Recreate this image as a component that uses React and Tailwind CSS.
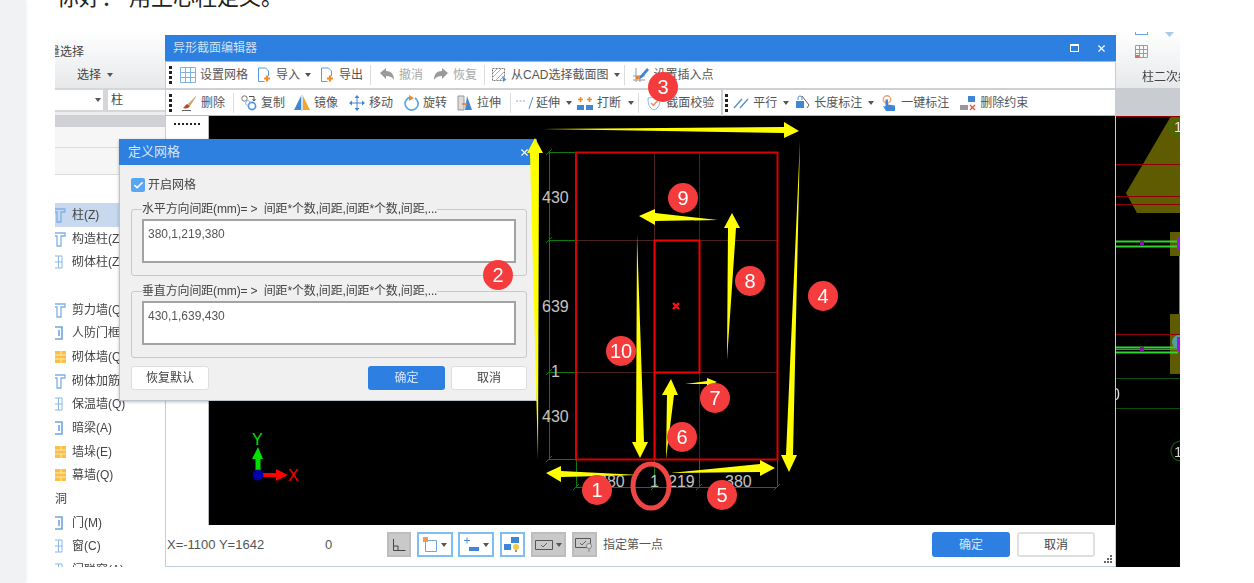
import { Check, X } from 'lucide-react';

const Dots = ({ className = '' }) => (
  <div className={`flex h-[18px] w-[3px] flex-col justify-between ${className}`}>
    <span className="h-[3px] w-[3px] bg-[#222]" />
    <span className="h-[3px] w-[3px] bg-[#222]" />
    <span className="h-[3px] w-[3px] bg-[#222]" />
    <span className="h-[3px] w-[3px] bg-[#222]" />
  </div>
);

const Caret = ({ className = '' }) => (
  <svg width="6" height="4" viewBox="0 0 6 4" className={`shrink-0 ${className}`}><path d="M0 0h6L3 4z" fill="#555" /></svg>
);

const Sep = ({ className = '' }) => <div className={`h-[20px] w-px shrink-0 bg-[#dcdcdc] ${className}`} />;

const Svg = ({ children, w = 16 }) => (
  <svg width={w} height="16" viewBox={`0 0 ${w} 16`} className="shrink-0" fill="none">{children}</svg>
);

// toolbar icons
const GridIcon = () => (
  <Svg><path d="M.5.5h15v15H.5zM5.5.5v15M10.5.5v15M.5 5.5h15M.5 10.5h15" stroke="#7db1e6" /></Svg>
);
const DocIcon = () => (
  <Svg><path d="M2.5 1h7l3 3v5M2.5 1v13.5h6" stroke="#5b9be0" /><path d="M8 11.5h6M11 8.5v6" stroke="#f08a2c" strokeWidth="2.2" /></Svg>
);
const UndoIcon = () => (
  <Svg><path d="M1 6l6-5v3c5 0 8 3 8 9-2-3-4-4-8-4v3z" fill="#9a9a9a" /></Svg>
);
const RedoIcon = () => (
  <Svg><path d="M15 6L9 1v3c-5 0-8 3-8 9 2-3 4-4 8-4v3z" fill="#9a9a9a" /></Svg>
);
const CadIcon = () => (
  <Svg><path d="M1.5 1.5h12v12h-12z" stroke="#777" strokeDasharray="2 1" /><path d="M2 10l8-8M2 6l4-4M5 13l8-8M9 13l4-4" stroke="#aaa" /><path d="M11 9l4.5 4-2 .5-.8 2z" fill="#3f8fe0" /></Svg>
);
const InsertIcon = () => (
  <Svg><path d="M3 1v14M0 9h12M0 13h12M7 8v7" stroke="#999" /><path d="M7 9l7-8 2 2-7 8-3 1z" fill="#3f86d8" /><circle cx="4.5" cy="10.5" r="1.8" fill="#ef7d22" /></Svg>
);
const BrushIcon = () => (
  <Svg><path d="M15 1L7 9l2 2 6-9z" fill="#c9a36a" /><path d="M6 9c-2 1-2 3-4 4 3 1 6 0 7-2z" fill="#b9481e" /><path d="M1 15.5h9" stroke="#666" /></Svg>
);
const CopyIcon = () => (
  <Svg><circle cx="3.5" cy="3.5" r="2.7" stroke="#777" /><circle cx="11" cy="11" r="3.6" stroke="#4a93de" strokeWidth="1.6" /><circle cx="7" cy="8" r="2.4" stroke="#8ab7e6" /><path d="M8 1.5h5v4M11.5 4l1.5 2 1.5-2" stroke="#555" /></Svg>
);
const MirrorIcon = () => (
  <Svg><path d="M7 1v14H0z" fill="#3f86d8" /><path d="M9 1v14h7z" fill="#f1a62f" /><path d="M8 0v16" stroke="#bbb" /></Svg>
);
const MoveIcon = () => (
  <Svg><path d="M8 3v10M3 8h10" stroke="#3f86d8" /><path d="M8 0l2.5 3h-5zM8 16l2.5-3h-5zM0 8l3-2.5v5zM16 8l-3-2.5v5z" fill="#3f86d8" /></Svg>
);
const RotateIcon = () => (
  <Svg><path d="M6 2.6A6.5 6.5 0 1 0 12 3" stroke="#5ba3e8" strokeWidth="1.7" /><path d="M6 0l5 3-5 3z" fill="#ef8a22" /></Svg>
);
const StretchIcon = () => (
  <Svg><path d="M1 1h6v14H1z" fill="#ddd" stroke="#999" /><path d="M10 1l5 14H8z" fill="#3f86d8" /><path d="M5 9h5" stroke="#ef7d22" strokeWidth="1.6" /></Svg>
);
const ExtendIcon = () => (
  <Svg w={19}><path d="M0 6h10" stroke="#8aa9c8" strokeDasharray="2 1.5" /><path d="M13 14l4-12" stroke="#5b8fc8" /></Svg>
);
const BreakIcon = () => (
  <Svg><path d="M0 10h7v5H0zM9 10h7v5H9z" fill="#3f86d8" /><path d="M3.5 2v5M1 4.5h5M12.5 2v5M10 4.5h5" stroke="#ef8a22" strokeWidth="1.6" /></Svg>
);
const ShieldIcon = () => (
  <Svg><path d="M8 1c2 1.5 4 2 6 2 0 6-1 10-6 12C3 13 2 9 2 3c2 0 4-.5 6-2z" stroke="#8ab7e6" /><path d="M5 8l2.5 2.5L12 5" stroke="#ef8a5a" strokeWidth="1.5" /></Svg>
);
const ParallelIcon = () => (
  <Svg><path d="M1 13L9 4M7 13l8-9" stroke="#5b8fc8" strokeWidth="1.4" /></Svg>
);
const LengthIcon = () => (
  <Svg><path d="M4 5V3a2 2 0 0 1 4 0v2" stroke="#4a93de" /><path d="M2 6h8v7H2z" fill="#3f86d8" /><path d="M8 1l7 9-2 3" stroke="#666" /></Svg>
);
const HandIcon = () => (
  <Svg><circle cx="6" cy="4.5" r="3.7" stroke="#f0a070" strokeWidth="1.4" /><path d="M4.5 4.5h2.5v5l7 1v5.5H5l-3-5 2.500.5z" fill="#3f86d8" /></Svg>
);
const ConstraintIcon = () => (
  <Svg><path d="M0 10h8v5H0z" fill="#999" /><path d="M8 1h7v6H8zM8 1v9" fill="#3f86d8" /><path d="M10 10l5 5M15 10l-5 5" stroke="#e5533d" strokeWidth="1.3" /></Svg>
);

const Tool = ({ icon, label, muted, className = '' }) => (
  <div className={`flex shrink-0 items-center gap-[4px] ${className}`}>
    {icon}
    <span className={muted ? 'text-[#a8a8a8]' : 'text-[#555]'}>{label}</span>
  </div>
);

// ribbon behind the editor, only the bottom of the text shows
const RibbonClip = () => (
  <div className="h-[3px] w-[951px] overflow-hidden text-xs text-[#444]">
    <div className="-mt-[13px] flex whitespace-nowrap">
      <span className="ml-[49px]">设置网格</span>
      <span className="ml-[30px]">设置楼层表</span>
      <span className="ml-[30px]">自动平齐板</span>
      <span className="ml-[24px]">截面编辑</span>
      <span className="ml-[50px]">移动</span>
      <span className="ml-[60px]">镜像</span>
      <span className="ml-[40px]">删除</span>
      <span className="ml-[44px]">旋转</span>
      <span className="ml-[30px]">拉伸</span>
      <span className="ml-[36px]">删除约束</span>
    </div>
  </div>
);

// side list icons are cut by the left edge of the shot
const BlueOutline = () => (
  <svg width="11" height="16" viewBox="0 0 11 16" fill="none"><path d="M0 2h10v3H6v10H2V5H0" stroke="#7db1e6" strokeWidth="1.3" /></svg>
);
const OrangeBlock = () => (
  <svg width="11" height="12" viewBox="0 0 11 12"><path d="M0 0h11v12H0z" fill="#fbbf44" /><path d="M0 4h11M0 8h11M6 0v4M6 8v4" stroke="#fde8b8" /></svg>
);
const BlueDoor = () => (
  <svg width="8" height="14" viewBox="0 0 8 14" fill="none"><path d="M0 1h7v12H0M4 4v6" stroke="#6ea6e0" strokeWidth="1.6" /></svg>
);
const BlueWindow = () => (
  <svg width="8" height="14" viewBox="0 0 8 14" fill="none"><path d="M0 1h7v12H0M0 7h7M3.500 1v12" stroke="#8ab7e6" /></svg>
);

const sideItems = [
  { label: '柱(Z)', icon: <BlueOutline />, on: true },
  { label: '构造柱(Z)', icon: <BlueOutline /> },
  { label: '砌体柱(Z)', icon: <BlueWindow /> },
  { label: '' },
  { label: '剪力墙(Q)', icon: <BlueOutline /> },
  { label: '人防门框墙', icon: <BlueDoor /> },
  { label: '砌体墙(Q)', icon: <OrangeBlock /> },
  { label: '砌体加筋', icon: <BlueOutline /> },
  { label: '保温墙(Q)', icon: <BlueWindow /> },
  { label: '暗梁(A)', icon: <BlueDoor /> },
  { label: '墙垛(E)', icon: <OrangeBlock /> },
  { label: '幕墙(Q)', icon: <OrangeBlock /> },
  { label: '洞', head: true },
  { label: '门(M)', icon: <BlueDoor /> },
  { label: '窗(C)', icon: <BlueWindow /> },
  { label: '门联窗(A)', icon: <BlueWindow /> },
];

const LeftPanel = () => (
  <div className="w-[110px] shrink-0 overflow-hidden text-xs text-[#444]">
    <div className="h-[56px] overflow-hidden bg-gradient-to-b from-white to-[#e6e8ea] pt-[12px]">
      <div className="-ml-[19px] h-[16px] leading-[16px] whitespace-nowrap">批量选择</div>
      <div className="mt-[7px] ml-[22px] flex h-[16px] items-center gap-[6px]">选择 <Caret /></div>
    </div>
    <div className="flex h-[24px] gap-[5px] bg-[#d4d6d9] py-[2px]">
      <div className="flex w-[48px] items-center justify-end bg-white pr-[2px]"><Caret /></div>
      <div className="flex-1 bg-white pl-[3px] leading-[20px]">柱</div>
    </div>
    <div className="h-[3px] bg-[#eeeeee]" />
    <div className="h-[12px] bg-[#cfd1d5]" />
    <div className="h-[21px] border-b border-[#dcdcdc] bg-[#f6f6f6]" />
    <div className="h-[27px] border-b border-[#dcdcdc] bg-[#f6f6f6]" />
    <div className="h-[28px]" />
    <div>
      {sideItems.map((item, i) => (
        <div key={i} className={`flex h-[23.7px] items-center ${item.on ? 'bg-[#c8d9ef]' : ''}`}>
          {!item.head && <div className="flex w-[17px] shrink-0 items-center">{item.icon}</div>}
          <span className="whitespace-nowrap">{item.label}</span>
        </div>
      ))}
    </div>
  </div>
);

const RightPanel = () => (
  <div className="w-[64px] shrink-0 overflow-hidden">
    <div className="flex h-[56px] bg-gradient-to-b from-white to-[#e6e8ea]">
      <div className="ml-[10px] h-[52px] w-px bg-[#dddddd]" />
      <div className="ml-[9px] text-xs text-[#444]">
        <div className="flex items-start">
          <div className="h-[3px] w-[13px] border-x border-b border-[#6ea6e0]" />
          <svg width="9" height="5" viewBox="0 0 9 5" className="ml-[17px]"><path d="M0 0h9L4.500 5z" fill="#a8c8ec" /></svg>
        </div>
        <svg width="13" height="13" viewBox="0 0 13 13" fill="none" className="mt-[8px]">
          <path d="M.5.5h12v12H.5zM4.500.5v12M8.500.5v12M.5 4.500h12M.5 8.500h12" stroke="#6ea6e0" />
          <path d="M0 10h4v3H0z" fill="#d9714a" />
        </svg>
        <div className="mt-[11px] ml-[7px] w-[60px] whitespace-nowrap">柱二次编辑</div>
      </div>
    </div>
    <div className="h-[28px] bg-[#c9ccd0]" />
    <svg width="64" height="451" viewBox="1116 116 64 451" className="block bg-black">
      <path d="M1171 116h9v97h-43l-11-20z" fill="#5f5b00" />
      <path d="M1116 116.500h64M1116 164.500h64M1116 196.500h64M1116 204.500h64" stroke="#8f0000" />
      <path d="M1170 232h10v24h-10zM1170 314h10v60h-10z" fill="#5f5b00" />
      <circle cx="1178" cy="127" r="8" fill="#5f5b00" stroke="#2f7a00" strokeWidth="1.5" />
      <text x="1174" y="132" fontSize="15" fill="#e5e5e5">1</text>
      <path d="M1116 241.500h62M1116 246.500h62M1116 347.500h62M1116 352.500h62" stroke="#2fd62f" strokeWidth="2" />
      <path d="M1116 334.500h64" stroke="#8f0000" />
      <path d="M1116 349.500h62" stroke="#a06a30" />
      <path d="M1179.500 256v58" stroke="#2fb82f" />
      <circle cx="1179" cy="342" r="7" fill="#4fa0a0" />
      <path d="M1140 241h4v4h-4zM1140 347h4v4h-4z" fill="#8a10b0" />
      <path d="M1177 238h3v12h-3zM1177 337h3v14h-3z" fill="#a010f0" />
      <path d="M1116 378.500h64M1116 408.500h64" stroke="#0a4f0a" />
      <text x="1111" y="400" fontSize="16" fill="#d8d8d8">0</text>
      <circle cx="1181" cy="451" r="10" stroke="#0a5c0a" strokeWidth="1.2" />
      <text x="1174" y="457" fontSize="15" fill="#d8d8d8">1</text>
    </svg>
  </div>
);

const CadDrawing = () => (
  <svg width="906" height="409" viewBox="209 116 906 409" className="block bg-black" fill="none">
    <path d="M549.500 152v307M549 152.500h27M549 240.500h27M549 372.500h27M549 459.500h27M576.500 459v28M654.500 459v28M699.500 459v28M777.500 459v28M576 487.500h201" stroke="#0e7a0e" />
    <path d="M546 155l6-6M546 243l6-6M546 375l6-6M546 462l6-6M573 490l6-6M651 490l6-6M696 490l6-6M774 490l6-6" stroke="#0e7a0e" />
    <path d="M654.500 152v88M699.500 152v88M576 240.500h78M699 240.500h78M576 372.500h78M699 372.500h78M699.500 372v87" stroke="#4a2020" />
    <path d="M576 152.500h201.500v307H576z" stroke="#d80000" strokeWidth="2" />
    <path d="M654.500 240.500h45v132h-45zM654.500 372v87" stroke="#f00000" strokeWidth="2" />
    <path d="M673 303l6 6M679 303l-6 6" stroke="#ff1010" strokeWidth="2.4" />
    <g fill="#c4c4c4" fontSize="16">
      <text x="542" y="203">430</text>
      <text x="542" y="312">639</text>
      <text x="551" y="377">1</text>
      <text x="542" y="422">430</text>
      <text x="598" y="487">380</text>
      <text x="650" y="487">1</text>
      <text x="668" y="487">219</text>
      <text x="725" y="487">380</text>
    </g>
    <path d="M258 475v-20" stroke="#00e000" strokeWidth="5" />
    <path d="M258 447l-6 12h11z" fill="#00e000" />
    <path d="M258 475h20" stroke="#ff0000" strokeWidth="4" />
    <path d="M288 475l-12-6v12z" fill="#ff0000" />
    <circle cx="258" cy="475" r="5.500" fill="#0000a8" />
    <text x="252" y="445" fontSize="16" fill="#00e000">Y</text>
    <text x="288" y="481" fontSize="16" fill="#ff0000">X</text>
  </svg>
);

const StatusBtn = ({ blue, children, className = '' }) => (
  <div className={`flex h-[25px] shrink-0 items-center justify-center gap-[3px] border-2 ${blue ? 'border-[#7fbdf5] bg-white' : 'border-[#bdbdbd] bg-[#c9c9c9]'} ${className}`}>
    {children}
  </div>
);

const EditorWindow = () => (
  <div className="absolute top-[3px] left-[110px] flex h-[532px] w-[951px] flex-col border-x border-b border-[#c3cde0] bg-white text-xs">
    <div className="-mx-px flex h-[26px] shrink-0 items-center bg-[#2d7fe0] pl-[8px] text-[#cfe1f7]">
      异形截面编辑器
      <div className="ml-auto h-[8px] w-[9px] border border-t-2 border-white" />
      <X className="mr-[9px] ml-[17px] h-[11px] w-[11px] text-white" strokeWidth={2.5} />
    </div>
    <div className="h-px shrink-0 bg-[#8fbdf0]" />

    <div className="flex h-[28px] shrink-0 items-center border-b-2 border-[#cdd0d4] pl-[3px]">
      <Dots />
      <Tool className="ml-[8px]" icon={<GridIcon />} label="设置网格" />
      <Tool className="ml-[8px]" icon={<DocIcon />} label="导入" />
      <Caret className="ml-[5px]" />
      <Tool className="ml-[8px]" icon={<DocIcon />} label="导出" />
      <Sep className="ml-[7px]" />
      <Tool className="ml-[8px]" icon={<UndoIcon />} label="撤消" muted />
      <Tool className="ml-[10px]" icon={<RedoIcon />} label="恢复" muted />
      <Sep className="ml-[7px]" />
      <Tool className="ml-[6px]" icon={<CadIcon />} label="从CAD选择截面图" />
      <Caret className="ml-[6px]" />
      <Sep className="ml-[4px]" />
      <Tool className="ml-[8px]" icon={<InsertIcon />} label="设置插入点" />
    </div>

    <div className="flex h-[26px] shrink-0 items-center border-b border-[#b5b8bc] pl-[3px]">
      <Dots />
      <Tool className="ml-[9px]" icon={<BrushIcon />} label="删除" />
      <Sep className="ml-[8px]" />
      <Tool className="ml-[7px]" icon={<CopyIcon />} label="复制" />
      <Tool className="ml-[9px]" icon={<MirrorIcon />} label="镜像" />
      <Tool className="ml-[11px]" icon={<MoveIcon />} label="移动" />
      <Tool className="ml-[10px]" icon={<RotateIcon />} label="旋转" />
      <Tool className="ml-[10px]" icon={<StretchIcon />} label="拉伸" />
      <Sep className="ml-[9px]" />
      <Tool className="ml-[5px] !gap-[1px]" icon={<ExtendIcon />} label="延伸" />
      <Caret className="ml-[6px]" />
      <Tool className="ml-[5px]" icon={<BreakIcon />} label="打断" />
      <Caret className="ml-[7px]" />
      <Sep className="ml-[4px]" />
      <Tool className="ml-[7px]" icon={<ShieldIcon />} label="截面校验" />
      <div className="ml-[7px] h-[26px] w-[2px] shrink-0 bg-[#cdd0d4]" />
      <Dots className="ml-[2px]" />
      <Tool className="ml-[5px]" icon={<ParallelIcon />} label="平行" />
      <Caret className="ml-[6px]" />
      <Tool className="ml-[5px]" icon={<LengthIcon />} label="长度标注" />
      <Caret className="ml-[6px]" />
      <Tool className="ml-[7px]" icon={<HandIcon />} label="一键标注" />
      <Tool className="ml-[11px]" icon={<ConstraintIcon />} label="删除约束" />
    </div>

    <div className="flex h-[409px] shrink-0">
      <div className="w-[43px] shrink-0 border-r border-[#b5b8bc] pt-[7px] pl-[8px]">
        <div className="h-[2px] w-[26px] bg-[repeating-linear-gradient(90deg,#222_0,#222_2px,transparent_2px,transparent_4px)]" />
      </div>
      <CadDrawing />
    </div>

    <div className="relative flex flex-1 items-center pb-[2px] text-[#555]">
      <span className="ml-px w-[158px] shrink-0 text-[13px] whitespace-nowrap">X=-1100 Y=1642</span>
      <span className="w-[62px] shrink-0 text-[13px]">0</span>
      <StatusBtn className="w-[24px]">
        <svg width="14" height="14" viewBox="0 0 14 14" fill="none"><path d="M1.500 1v11.500h12M1.500 8H6v4" stroke="#444" /></svg>
      </StatusBtn>
      <StatusBtn blue className="ml-[6px] w-[36px]">
        <svg width="15" height="16" viewBox="0 0 15 16" fill="none"><path d="M2.500 3.500h11v11h-11z" stroke="#6ea6e0" /><path d="M0 0h5v5H0z" fill="#f09a50" /></svg>
        <Caret />
      </StatusBtn>
      <StatusBtn blue className="ml-[5px] w-[36px]">
        <svg width="16" height="16" viewBox="0 0 16 16" fill="none"><path d="M0 3.500h6M3 .5v6" stroke="#4a93de" /><path d="M5 10h10v4H5z" fill="#3f86d8" /></svg>
        <Caret />
      </StatusBtn>
      <StatusBtn blue className="ml-[6px] w-[25px]">
        <svg width="17" height="17" viewBox="0 0 17 17"><path d="M7 1h8v6H7zM0 8h7v6H0z" fill="#3f86d8" /><circle cx="12" cy="11" r="3" fill="#f5c842" /><path d="M11 14h2v2h-2z" fill="#a88" /></svg>
      </StatusBtn>
      <StatusBtn className="ml-[6px] w-[35px]">
        <svg width="18" height="12" viewBox="0 0 18 12" fill="none"><path d="M.5 1.500h17v9H.5z" stroke="#555" /><path d="M6 6l2 2 4-4" stroke="#666" /></svg>
        <Caret />
      </StatusBtn>
      <StatusBtn className="ml-[6px] w-[25px]">
        <svg width="19" height="16" viewBox="0 0 19 16" fill="none"><path d="M.5 1.500h15v9H.5z" stroke="#555" /><path d="M5 6l2 2 4-4" stroke="#666" /><circle cx="14" cy="9" r="2.500" fill="#ddd" stroke="#888" /><path d="M14 11v4" stroke="#888" /></svg>
      </StatusBtn>
      <span className="ml-[6px] shrink-0">指定第一点</span>
      <div className="ml-auto flex h-[25px] w-[78px] items-center justify-center rounded-[3px] bg-[#2d80e2] text-[#d6e6fa]">确定</div>
      <div className="mr-[20px] ml-[7px] flex h-[25px] w-[78px] items-center justify-center rounded-[3px] border-2 border-[#e0e0e0] bg-white text-[#444]">取消</div>
      <svg width="9" height="9" viewBox="0 0 9 9" className="absolute right-[3px] bottom-[2px]">
        <path d="M7 0h2v2H7zM4 3h2v2H4zM7 3h2v2H7zM1 6h2v2H1zM4 6h2v2H4zM7 6h2v2H7z" fill="#666" />
      </svg>
    </div>
  </div>
);

const Spacing = ({ legend, value, className = '' }) => (
  <fieldset className={`h-[74px] w-[396px] rounded-[3px] border border-[#c9c9c9] px-[10px] ${className}`}>
    <legend className="leading-[14px] tracking-[-0.15px] whitespace-pre text-[#444]">{legend}</legend>
    <textarea
      readOnly
      value={value}
      className="mt-[3px] block h-[44px] w-[374px] resize-none border-2 border-[#a3a3a3] bg-white px-[4px] py-[5px] text-[#555] outline-none"
    />
  </fieldset>
);

const GridDialog = () => (
  <div className="absolute top-[107px] left-[64px] flex h-[262px] w-[418px] flex-col border-x border-b border-[#bcc4d0] bg-[#f0f0f0] text-xs shadow-[0_1px_3px_rgba(0,0,0,0.25)]">
    <div className="-mx-px flex h-[26px] shrink-0 items-center justify-between bg-[#2d7fe0] pr-[7px] pl-[9px] text-[13px] text-[#d6e6fa]">
      定义网格
      <X className="h-[11px] w-[11px] text-white" strokeWidth={2.5} />
    </div>
    <div className="flex-1 pl-[11px]">
      <div className="mt-[13px] flex h-[14px] items-center gap-[3px] text-[#444]">
        <div className="flex h-[14px] w-[14px] items-center justify-center rounded-[2px] bg-[#5aa6f0]">
          <Check className="h-[11px] w-[11px] text-white" strokeWidth={3.5} />
        </div>
        开启网格
      </div>
      <Spacing className="mt-[10px]" legend="水平方向间距(mm)= >  间距*个数,间距,间距*个数,间距,..." value="380,1,219,380" />
      <Spacing className="mt-[8px]" legend="垂直方向间距(mm)= >  间距*个数,间距,间距*个数,间距,..." value="430,1,639,430" />
      <div className="mt-[8px] flex w-[396px] text-[#444]">
        <div className="flex h-[24px] w-[78px] items-center justify-center rounded-[3px] border border-[#dedede] bg-white">恢复默认</div>
        <div className="ml-auto flex h-[24px] w-[77px] items-center justify-center rounded-[3px] bg-[#2d80e2] text-[#d6e6fa]">确定</div>
        <div className="ml-[6px] flex h-[24px] w-[76px] items-center justify-center rounded-[3px] border border-[#dedede] bg-white">取消</div>
      </div>
    </div>
  </div>
);

const arrows = [
  '541,129 784,127 784,122 799,131 784,138 784,133',
  '538,460 530,153 527,153 535,138 543,153 539,153',
  '800,140 793,455 797,455 789,472 781,455 786,455',
  '640,475 561,477 561,482 546,473 561,466 561,471',
  '670,473 760,472 760,476 775,468 760,460 760,464',
  '666,459 667,395 662,395 671,379 678,395 674,395',
  '685,384 707,384 707,386 717,382 707,378 707,381',
  '727,360 728,228 724,228 732,213 740,228 736,228',
  '718,220 655,221 655,225 639,216 655,209 655,213',
  '637,234 636,442 632,442 640,458 648,442 644,442',
];

const badges = [
  { n: 1, x: 597, y: 490 },
  { n: 2, x: 498, y: 275 },
  { n: 3, x: 663, y: 87 },
  { n: 4, x: 823, y: 296 },
  { n: 5, x: 722, y: 495 },
  { n: 6, x: 682, y: 437 },
  { n: 7, x: 715, y: 398 },
  { n: 8, x: 750, y: 281 },
  { n: 9, x: 683, y: 198 },
  { n: 10, x: 621, y: 351 },
];

// markup someone drew on top of the screenshot
const Markup = () => (
  <svg width="1125" height="535" viewBox="55 32 1125 535" className="pointer-events-none absolute inset-0">
    {arrows.map((p) => <polygon key={p} points={p} fill="#ffff00" />)}
    <ellipse cx="651" cy="486" rx="18" ry="22" fill="none" stroke="#f04545" strokeWidth="5" />
    {badges.map((b) => (
      <g key={b.n}>
        <circle cx={b.x} cy={b.y} r="15" fill="#f43c3c" />
        <text x={b.x} y={b.y + 7} textAnchor="middle" fontSize="20" fill="#fff">{b.n}</text>
      </g>
    ))}
  </svg>
);

export default function App() {
  return (
    <div className="flex h-[583px] w-[1254px] overflow-hidden bg-white [font-family:'Liberation_Sans','Noto_Sans_CJK_SC',sans-serif]">
      <div className="w-[25px] shrink-0 bg-[#f1f2f4] shadow-[1px_0_3px_rgba(0,0,0,0.08)]" />
      <div className="flex-1">
        <div className="h-[32px] overflow-hidden">
          <p className="-mt-[17px] ml-[32px] text-[22px] leading-[30px] whitespace-pre text-[#222]">你好： 用上心柱定义。</p>
        </div>
        <div className="relative ml-[30px] h-[535px] w-[1125px] overflow-hidden">
          <div className="absolute inset-0 blur-[0.35px]">
            <div className="flex h-full">
              <LeftPanel />
              <RibbonClip />
              <RightPanel />
            </div>
            <EditorWindow />
            <GridDialog />
          </div>
          <Markup />
        </div>
      </div>
    </div>
  );
}
